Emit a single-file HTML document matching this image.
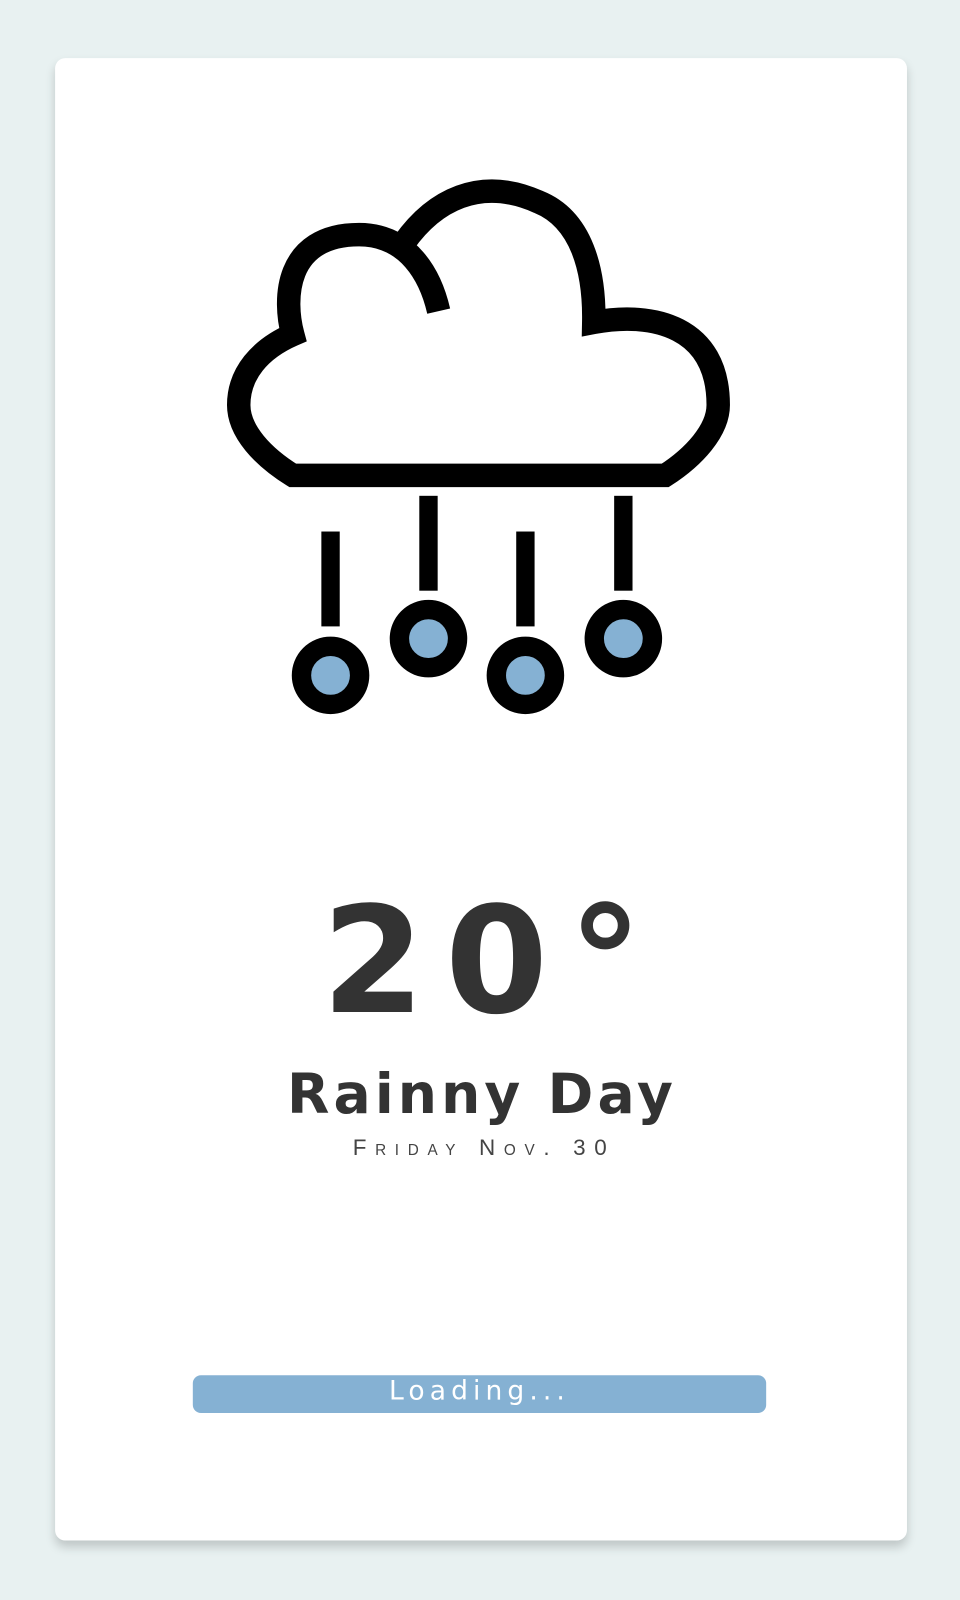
<!DOCTYPE html>
<html><head><style>
html,body{margin:0;padding:0;background:#e8f1f1;width:960px;height:1600px;overflow:hidden}
#w{position:absolute;left:0;top:0;width:941px;height:1568px;transform:scale(1.0202);transform-origin:0 0}
.card{position:absolute;left:54px;top:57px;width:835px;height:1453px;background:#fff;border-radius:10px;box-shadow:0 6px 10px rgba(0,0,0,.18)}
.t{position:absolute;left:0;width:941px;text-align:center;color:#333;font-family:"DejaVu Sans","Liberation Sans",sans-serif}
</style></head><body><div id="w">
<div class="card"></div>
<svg style="position:absolute;left:0;top:0" width="941" height="760" viewBox="0 0 941 760">
<g fill="none" stroke="#000" stroke-width="23">
<path d="M430 305 C422 270 400 230 352 230 C278 230 278 295 287 328 C255 342 234 366 234 397 C234 423 258 448 287 466 L652 466 C680 448 704 422 704 397 C704 320 640 305 582 316 C583 265 570 215 528 198 C470 172 425 197 396 238"/>
</g>
<g fill="#000">
<rect x="315" y="521" width="18" height="93"/><rect x="411" y="486" width="18" height="93"/>
<rect x="506" y="521" width="18" height="93"/><rect x="602" y="486" width="18" height="93"/>
</g>
<g fill="#85b1d3" stroke="#000" stroke-width="19">
<circle cx="324" cy="662" r="28.5"/><circle cx="420" cy="626" r="28.5"/>
<circle cx="515" cy="662" r="28.5"/><circle cx="611" cy="626" r="28.5"/>
</g>
</svg>
<div class="t" style="top:858px;font-size:145px;font-weight:bold;letter-spacing:20px;line-height:170px;padding-left:24px;box-sizing:border-box">20°</div>
<div class="t" style="top:1038px;font-size:54px;font-weight:bold;letter-spacing:4px;line-height:70px;padding-left:4px;box-sizing:border-box">Rainny Day</div>
<div class="t" style="top:1112px;font-size:22px;font-variant:small-caps;letter-spacing:8.5px;line-height:26px;color:#444;font-family:'Liberation Sans',sans-serif;padding-left:8px;box-sizing:border-box">Friday Nov. 30</div>
<div style="position:absolute;left:189px;top:1348px;width:562px;height:37px;background:#85b1d3;border-radius:8px;color:#fff;text-align:center;font-family:'DejaVu Sans',sans-serif;font-size:26px;letter-spacing:5px;line-height:33px">Loading...</div>
</div></body></html>
